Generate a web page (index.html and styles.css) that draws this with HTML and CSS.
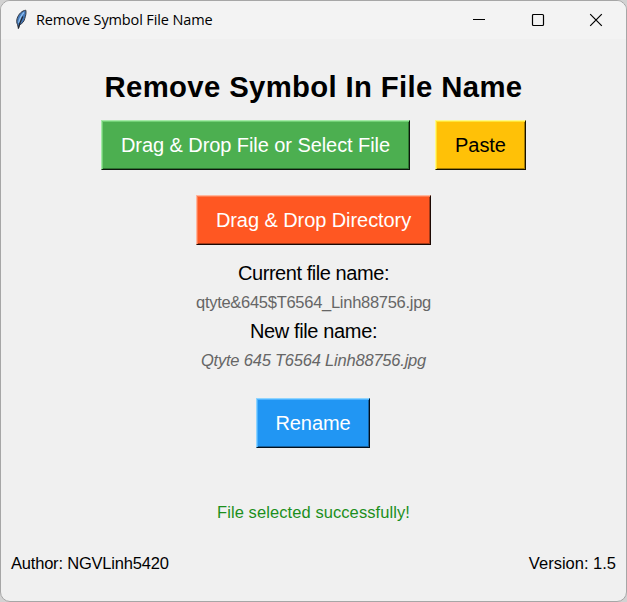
FILE: index.html
```html
<!DOCTYPE html>
<html lang="en">
<head>
<meta charset="utf-8">
<title>Remove Symbol File Name</title>
<link rel="stylesheet" href="styles.css">
</head>
<body>
<div class="window">
  <header class="titlebar">
    <svg class="feather" width="14" height="22" viewBox="0 0 14 22">
      <path d="M11.800 1.200C8 1.600 4.600 5 3.200 9.200c-.8 2.600-.6 4.800.4 6.600l.8 3.600 1-3.400c2.800-1.400 4.800-3.600 5.400-6.600.9-2.800 1.600-5.600 1-8.200z" fill="#4478b8" stroke="#353b45" stroke-width="1"/>
      <path d="M10 3.500C7 6.500 5.500 10 4.700 14" fill="none" stroke="#8fc0f0" stroke-width="1.300"/>
      <path d="M8.800 7.500C7 11 5.500 14 4.400 19.500" fill="none" stroke="#20242c" stroke-width="1.200"/>
    </svg>
    <span class="caption">Remove Symbol File Name</span>
    <div class="controls">
      <svg width="14" height="14" viewBox="0 0 14 14"><path d="M1 6.500h12" stroke="#000" fill="none"/></svg>
      <svg width="14" height="14" viewBox="0 0 14 14"><rect x="1.500" y="1.500" width="11" height="11" rx="1" stroke="#000" stroke-width="1.200" fill="none"/></svg>
      <svg width="14" height="14" viewBox="0 0 14 14"><path d="M1.200 1.200l11.600 11.600M12.800 1.200L1.200 12.800" stroke="#000" stroke-width="1.200" fill="none"/></svg>
    </div>
  </header>
  <main class="content">
    <h1 class="heading">Remove Symbol In File Name</h1>
    <div class="pickers">
      <button class="btn select">Drag &amp; Drop File or Select File</button>
      <button class="btn paste">Paste</button>
    </div>
    <button class="btn directory">Drag &amp; Drop Directory</button>
    <div class="label current">Current file name:</div>
    <div class="value">qtyte&amp;645$T6564_Linh88756.jpg</div>
    <div class="label new">New file name:</div>
    <div class="value renamed">Qtyte 645 T6564 Linh88756.jpg</div>
    <button class="btn rename">Rename</button>
    <div class="status">File selected successfully!</div>
  </main>
  <footer class="footer">
    <span class="author">Author: NGVLinh5420</span>
    <span class="version">Version: 1.5</span>
  </footer>
</div>
</body>
</html>
```
FILE: styles.css
```css
* { box-sizing: border-box; }
body {
  margin: 0;
  background: #d2d2d2;
  font-family: "Liberation Sans", Arial, sans-serif;
  color: #000;
}
.window {
  display: flex;
  flex-direction: column;
  width: 627px;
  height: 602px;
  border: 1px solid #a6a6a6;
  border-radius: 10px;
  background: #f0f0f0;
  overflow: hidden;
}
.titlebar {
  display: flex;
  align-items: center;
  height: 38px;
  padding: 0 23px 0 13px;
  background: #f3f3f3;
}
.caption {
  margin-left: 8px;
  font: 14.5px/20px "Open Sans", sans-serif;
  letter-spacing: -0.12px;
  white-space: nowrap;
}
.controls {
  display: flex;
  gap: 44.500px;
  margin-left: auto;
}
.controls svg, .feather { display: block; }
.content {
  display: flex;
  flex: 1;
  flex-direction: column;
  align-items: center;
}
.heading {
  margin: 30px 0 0;
  font-size: 29.300px;
  line-height: 36px;
  letter-spacing: 0.36px;
  white-space: nowrap;
}
.pickers {
  display: flex;
  gap: 25px;
  margin: 15px 0 25px;
}
.btn {
  height: 50px;
  padding: 0;
  border: 1px solid;
  font: 20px/48px "Liberation Sans", Arial, sans-serif;
  letter-spacing: -0.07px;
  white-space: nowrap;
}
.select {
  width: 309px;
  background: #4caf50;
  border-color: #a5eaa8 #0c160c #0c160c #a5eaa8;
  box-shadow: inset 1px 1px #72d076, inset -1px -1px #2f7432;
  color: #fff;
}
.paste {
  width: 91px;
  background: #ffc107;
  border-color: #fff98a #171200 #171200 #fff98a;
  box-shadow: inset 1px 1px #ffe436, inset -1px -1px #a47c04;
}
.directory {
  width: 235px;
  background: #ff5722;
  border-color: #ffb79f #1c0904 #1c0904 #ffb79f;
  box-shadow: inset 1px 1px #ff7d50, inset -1px -1px #a43a18;
  color: #fff;
}
.rename {
  width: 114px;
  margin: 23px 1px 0 0;
  background: #2196f3;
  border-color: #8ed4ff #04101c #04101c #8ed4ff;
  box-shadow: inset 1px 1px #4fb4ff, inset -1px -1px #17609c;
  color: #fff;
}
.label {
  font-size: 20px;
  line-height: 29px;
  letter-spacing: -0.44px;
}
.current { margin-top: 14px; }
.new { letter-spacing: -0.36px; }
.value {
  font-size: 16.500px;
  line-height: 29px;
  letter-spacing: -0.28px;
  color: #666;
}
.renamed {
  font-style: italic;
  letter-spacing: -0.21px;
}
.status {
  margin-top: 50px;
  font-size: 16.500px;
  line-height: 28px;
  letter-spacing: 0.08px;
  color: #1c8f1c;
}
.footer {
  display: flex;
  justify-content: space-between;
  height: 52px;
  padding: 0 10px;
  font-size: 16.500px;
  line-height: 28px;
}
.author { letter-spacing: -0.2px; }
```
